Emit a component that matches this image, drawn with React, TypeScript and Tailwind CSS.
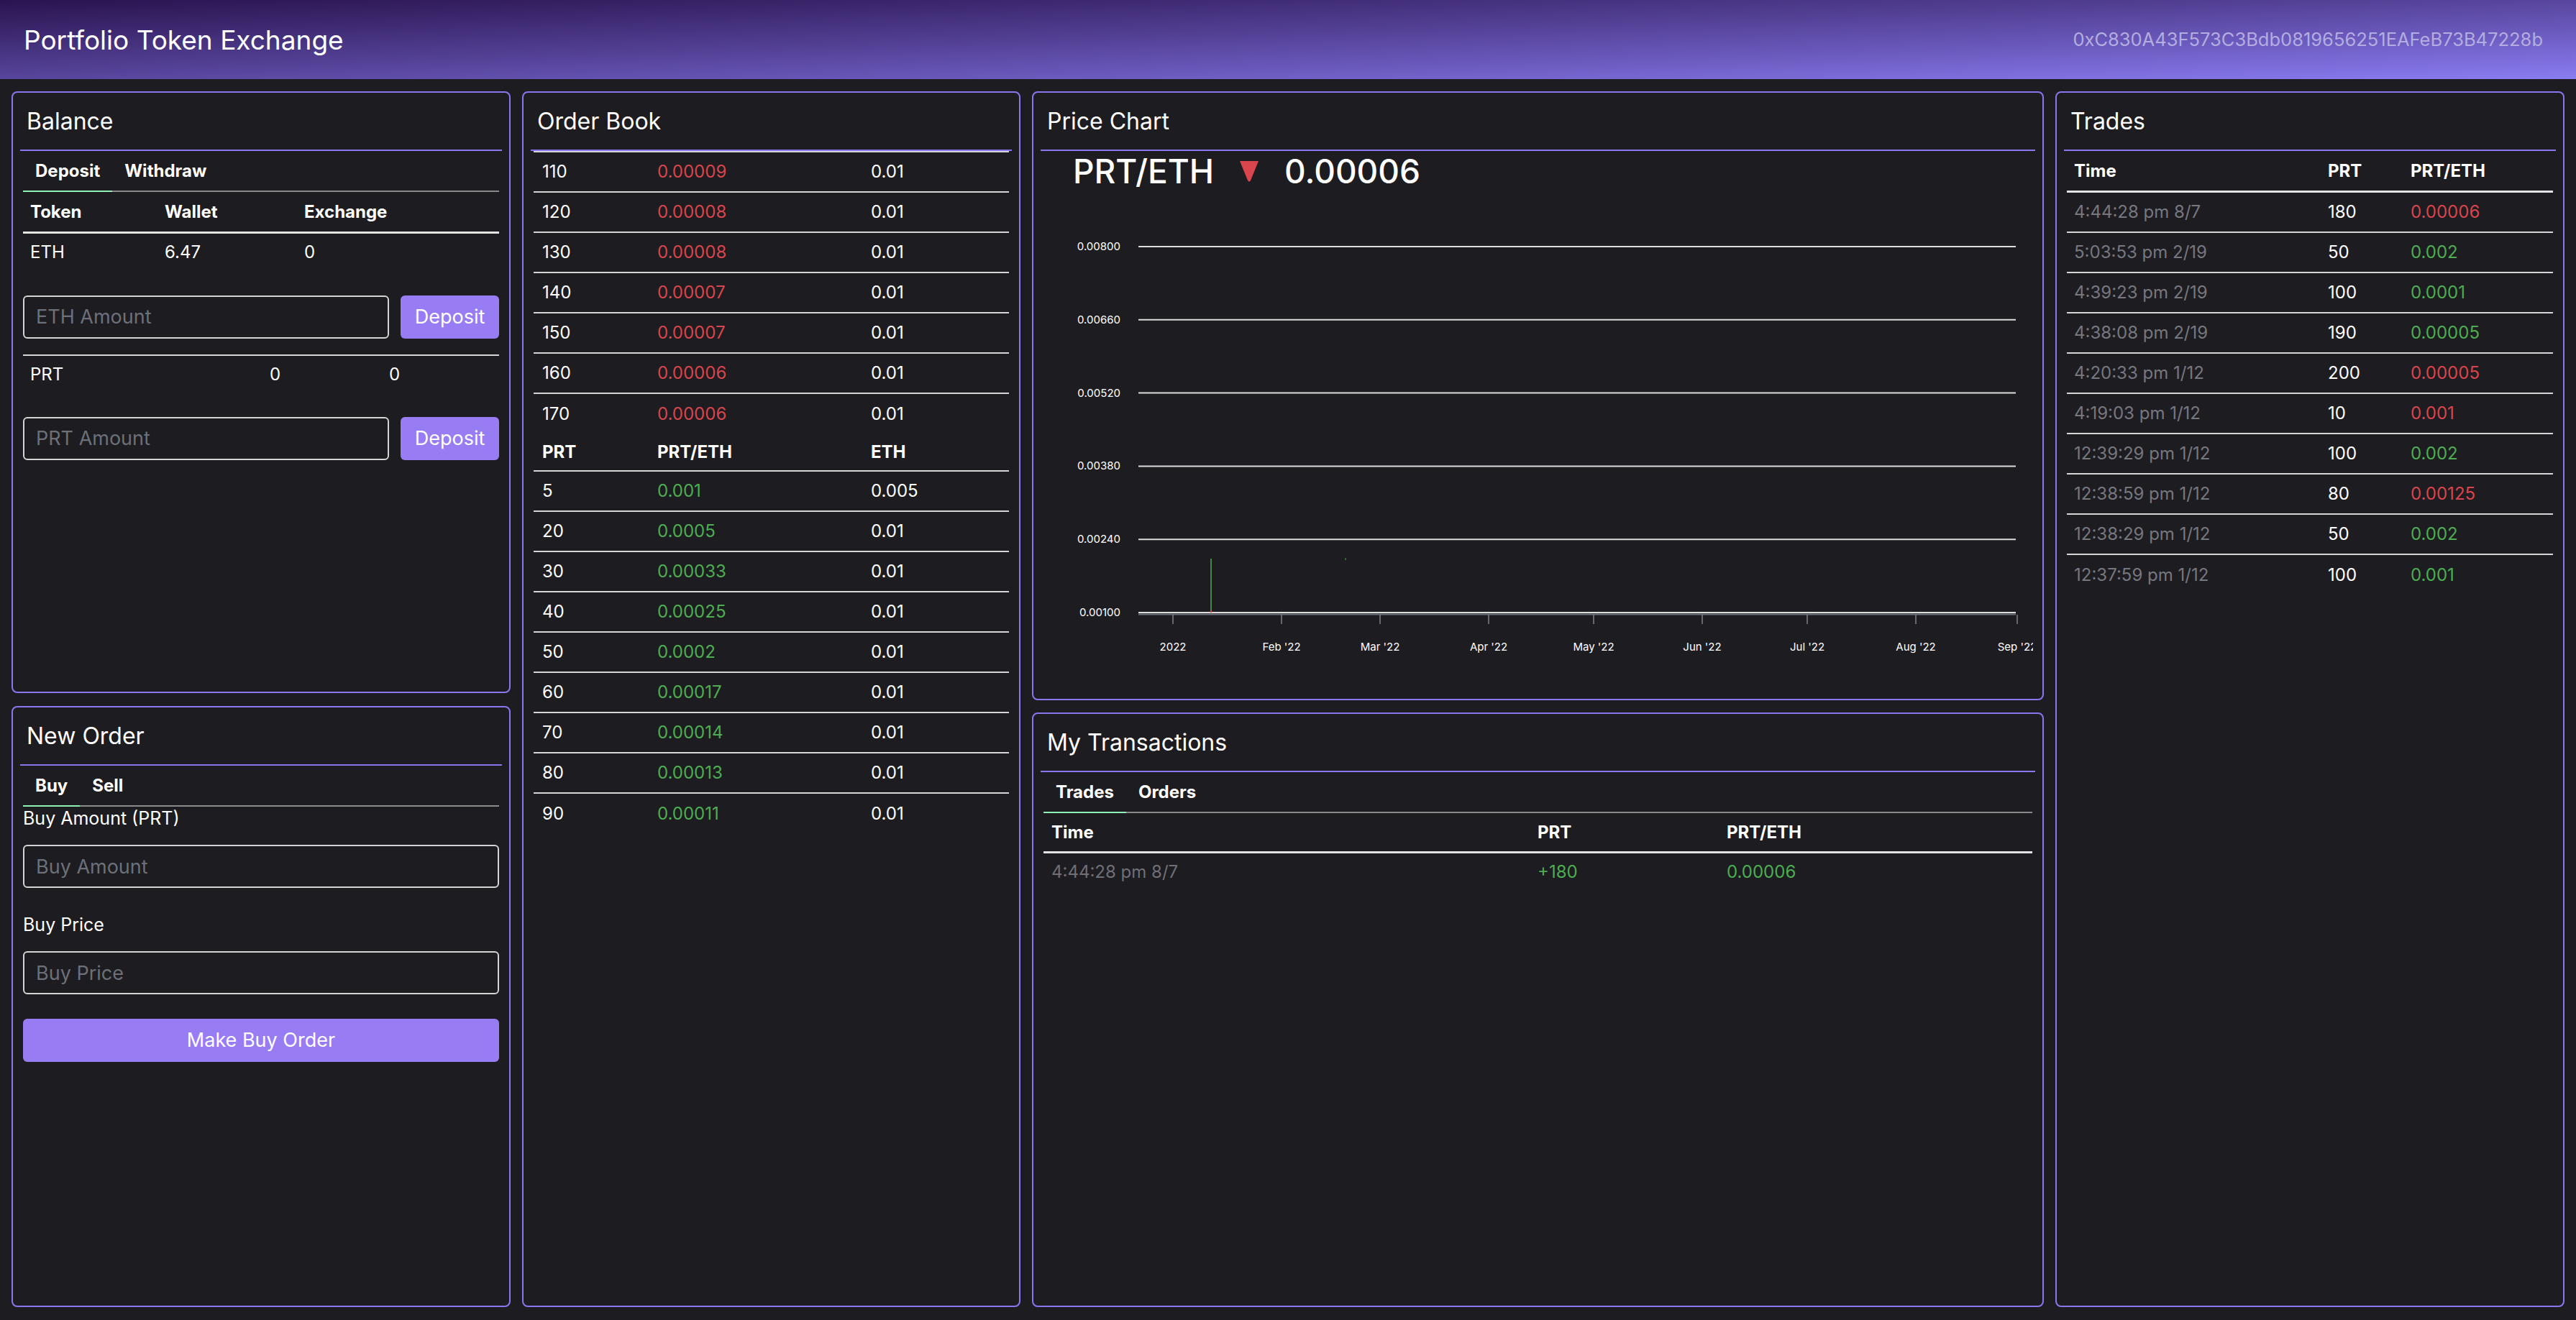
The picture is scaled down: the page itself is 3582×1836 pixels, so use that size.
import type { ReactNode } from 'react'

const sells: [string, string, string][] = [
  ['110', '0.00009', '0.01'],
  ['120', '0.00008', '0.01'],
  ['130', '0.00008', '0.01'],
  ['140', '0.00007', '0.01'],
  ['150', '0.00007', '0.01'],
  ['160', '0.00006', '0.01'],
  ['170', '0.00006', '0.01'],
]

const buys: [string, string, string][] = [
  ['5', '0.001', '0.005'],
  ['20', '0.0005', '0.01'],
  ['30', '0.00033', '0.01'],
  ['40', '0.00025', '0.01'],
  ['50', '0.0002', '0.01'],
  ['60', '0.00017', '0.01'],
  ['70', '0.00014', '0.01'],
  ['80', '0.00013', '0.01'],
  ['90', '0.00011', '0.01'],
]

const trades: { time: string; amount: string; price: string; up: boolean }[] = [
  { time: '4:44:28 pm 8/7', amount: '180', price: '0.00006', up: false },
  { time: '5:03:53 pm 2/19', amount: '50', price: '0.002', up: true },
  { time: '4:39:23 pm 2/19', amount: '100', price: '0.0001', up: true },
  { time: '4:38:08 pm 2/19', amount: '190', price: '0.00005', up: true },
  { time: '4:20:33 pm 1/12', amount: '200', price: '0.00005', up: false },
  { time: '4:19:03 pm 1/12', amount: '10', price: '0.001', up: false },
  { time: '12:39:29 pm 1/12', amount: '100', price: '0.002', up: true },
  { time: '12:38:59 pm 1/12', amount: '80', price: '0.00125', up: false },
  { time: '12:38:29 pm 1/12', amount: '50', price: '0.002', up: true },
  { time: '12:37:59 pm 1/12', amount: '100', price: '0.001', up: true },
]

const yTicks = ['0.00800', '0.00660', '0.00520', '0.00380', '0.00240', '0.00100']
const xTicks: [string, number][] = [
  ['2022', 184],
  ["Feb '22", 335],
  ["Mar '22", 472],
  ["Apr '22", 623],
  ["May '22", 769],
  ["Jun '22", 920],
  ["Jul '22", 1066],
  ["Aug '22", 1217],
  ["Sep '22", 1358],
]

function Panel({ title, className, children }: { title: string; className?: string; children?: ReactNode }) {
  return (
    <section className={`flex min-h-0 flex-col rounded-lg border-2 border-[#8a77f0] px-[10px] ${className ?? ''}`}>
      <div className="flex h-[81px] shrink-0 items-center border-b-2 border-[#8a77f0] pl-[9px] text-[32px] leading-none">
        {title}
      </div>
      {children}
    </section>
  )
}

function Tabs({ items }: { items: string[] }) {
  return (
    <div className="mx-1 flex h-[57px] shrink-0 items-stretch border-b-2 border-[#8a8a8a]">
      {items.map((t, i) => (
        <div
          key={t}
          className={`-mb-[2px] flex items-center border-b-2 px-[17px] text-[24px] font-bold ${
            i === 0 ? 'border-[#8ff0b4]' : 'border-transparent'
          }`}
        >
          {t}
        </div>
      ))}
    </div>
  )
}

function AmountRow({ placeholder }: { placeholder: string }) {
  return (
    <div className="mx-1 flex h-[60px] gap-4">
      <input
        placeholder={placeholder}
        className="min-w-0 flex-1 rounded-md border-2 border-[#d4d4d4] bg-transparent px-4 text-[27px] text-white outline-none placeholder:text-[#6b7079]"
      />
      <button className="w-[137px] rounded-md bg-[#977cf4] text-[27px] text-white">Deposit</button>
    </div>
  )
}

function Balance() {
  return (
    <Panel title="Balance" className="h-[837px] shrink-0">
      <Tabs items={['Deposit', 'Withdraw']} />
      <div className="mx-1">
        <div className="grid h-[58px] grid-cols-[187px_194px_1fr] items-center border-b-[3px] border-[#e2e2e2] text-[24px] font-bold">
          <div className="pl-[10px]">Token</div>
          <div className="pl-[10px]">Wallet</div>
          <div className="pl-[10px]">Exchange</div>
        </div>
        <div className="grid h-[52px] grid-cols-[187px_194px_1fr] items-center text-[24px]">
          <div className="pl-[10px]">ETH</div>
          <div className="pl-[10px]">6.47</div>
          <div className="pl-[10px]">0</div>
        </div>
      </div>
      <div className="mt-[34px]">
        <AmountRow placeholder="ETH Amount" />
      </div>
      <div className="mx-1 mt-[22px] border-t-2 border-[#d6d6d6]">
        <div className="grid h-[52px] grid-cols-[333px_166px_1fr] items-center text-[24px]">
          <div className="pl-[10px]">PRT</div>
          <div className="pl-[10px]">0</div>
          <div className="pl-[10px]">0</div>
        </div>
      </div>
      <div className="mt-[33px]">
        <AmountRow placeholder="PRT Amount" />
      </div>
    </Panel>
  )
}

function NewOrder() {
  return (
    <Panel title="New Order" className="flex-1">
      <Tabs items={['Buy', 'Sell']} />
      <div className="mx-1 flex flex-col text-[25px]">
        <label className="mt-[2px] leading-[29px]">Buy Amount (PRT)</label>
        <input
          placeholder="Buy Amount"
          className="mt-[22px] h-[60px] rounded-md border-2 border-[#d4d4d4] bg-transparent px-4 text-[27px] text-white outline-none placeholder:text-[#6b7079]"
        />
        <label className="mt-[37px] leading-[29px]">Buy Price</label>
        <input
          placeholder="Buy Price"
          className="mt-[22px] h-[60px] rounded-md border-2 border-[#d4d4d4] bg-transparent px-4 text-[27px] text-white outline-none placeholder:text-[#6b7079]"
        />
        <button className="mt-[34px] h-[60px] rounded-md bg-[#977cf4] text-[27px] text-white">Make Buy Order</button>
      </div>
    </Panel>
  )
}

function OrderBook() {
  const row = 'grid h-[56px] grid-cols-[160px_297px_1fr] items-center text-[24px]'
  return (
    <Panel title="Order Book" className="h-full">
      <div className="mx-1 border-t-2 border-[#d6d6d6]">
        {sells.map(([a, p, e], i) => (
          <div key={a} className={`${row} ${i < sells.length - 1 ? 'border-b-2 border-[#d6d6d6]' : ''}`}>
            <div className="pl-3">{a}</div>
            <div className="pl-3 text-[#d9454c]">{p}</div>
            <div className="pl-3">{e}</div>
          </div>
        ))}
        <div className="grid h-[52px] grid-cols-[160px_297px_1fr] items-center border-b-2 border-[#d6d6d6] text-[24px] font-bold">
          <div className="pl-3">PRT</div>
          <div className="pl-3">PRT/ETH</div>
          <div className="pl-3">ETH</div>
        </div>
        {buys.map(([a, p, e], i) => (
          <div key={a} className={`${row} ${i < buys.length - 1 ? 'border-b-2 border-[#d6d6d6]' : ''}`}>
            <div className="pl-3">{a}</div>
            <div className="pl-3 text-[#4cae50]">{p}</div>
            <div className="pl-3">{e}</div>
          </div>
        ))}
      </div>
    </Panel>
  )
}

function Chart() {
  const ys = yTicks.map((_, i) => 77 + i * 101.8)
  return (
    <svg width="1380" height="680" viewBox="0 0 1380 680" className="block shrink-0">
      {yTicks.map((t, i) => (
        <g key={t}>
          <line x1="136" x2="1356" y1={ys[i]} y2={ys[i]} stroke="#dcdcdc" strokeWidth="2" />
          <text x="111" y={ys[i] + 5} textAnchor="end" fontSize="15" fill="#ffffff">
            {t}
          </text>
        </g>
      ))}
      <line x1="136" x2="1356" y1="588.5" y2="588.5" stroke="#6f757d" strokeWidth="2" />
      {xTicks.map(([t, x]) => (
        <g key={t}>
          <line x1={x} x2={x} y1="589" y2="602" stroke="#7c828a" strokeWidth="1.5" />
          <text x={x} y="639" textAnchor="middle" fontSize="15" fill="#ffffff">
            {t}
          </text>
        </g>
      ))}
      <line x1="237" x2="237" y1="511" y2="585" stroke="#4cae50" strokeWidth="1.5" />
      <rect x="236" y="583" width="2" height="3" fill="#d9454c" />
      <line x1="424" x2="424" y1="510" y2="513" stroke="#4cae50" strokeWidth="1" />
    </svg>
  )
}

function PriceChart() {
  return (
    <Panel title="Price Chart" className="h-[847px] shrink-0 overflow-hidden">
      <div className="flex h-[56px] shrink-0 items-center pl-[45px] text-[46px] font-medium leading-none">
        <span>PRT/ETH</span>
        <svg width="30" height="32" viewBox="0 0 30 32" className="ml-[34px]">
          <path d="M2 2 H28 L17 29 Q15 32 13 29 Z" fill="#d9454c" />
        </svg>
        <span className="ml-[34px]">0.00006</span>
      </div>
      <Chart />
    </Panel>
  )
}

function MyTransactions() {
  return (
    <Panel title="My Transactions" className="flex-1">
      <Tabs items={['Trades', 'Orders']} />
      <div className="mx-1">
        <div className="grid h-[56px] grid-cols-[676px_263px_1fr] items-center border-b-[3px] border-[#e2e2e2] text-[24px] font-bold">
          <div className="pl-[11px]">Time</div>
          <div className="pl-[11px]">PRT</div>
          <div className="pl-[11px]">PRT/ETH</div>
        </div>
        <div className="grid h-[52px] grid-cols-[676px_263px_1fr] items-center text-[24px]">
          <div className="pl-[11px] text-[#6f6f78]">4:44:28 pm 8/7</div>
          <div className="pl-[11px] text-[#4cae50]">+180</div>
          <div className="pl-[11px] text-[#4cae50]">0.00006</div>
        </div>
      </div>
    </Panel>
  )
}

function Trades() {
  return (
    <Panel title="Trades" className="h-full">
      <div className="mx-1">
        <div className="grid h-[58px] grid-cols-[353px_115px_1fr] items-center border-b-[3px] border-[#e2e2e2] text-[24px] font-bold">
          <div className="pl-[10px]">Time</div>
          <div className="pl-[10px]">PRT</div>
          <div className="pl-[10px]">PRT/ETH</div>
        </div>
        {trades.map((t, i) => (
          <div
            key={t.time}
            className={`grid h-[56px] grid-cols-[353px_115px_1fr] items-center text-[24px] ${
              i < trades.length - 1 ? 'border-b-2 border-[#d6d6d6]' : ''
            }`}
          >
            <div className="pl-[10px] text-[#77777f]">{t.time}</div>
            <div className="pl-[10px]">{t.amount}</div>
            <div className={`pl-[10px] ${t.up ? 'text-[#4cae50]' : 'text-[#d9454c]'}`}>{t.price}</div>
          </div>
        ))}
      </div>
    </Panel>
  )
}

export default function App() {
  return (
    <div className="flex h-screen flex-col overflow-hidden bg-[#1d1c21] font-['Inter','Noto_Sans',sans-serif] text-white">
      <header className="flex h-[110px] shrink-0 items-center justify-between bg-linear-to-br from-[#2a1450] to-[#8a7cf2] pl-[33px] pr-[46px]">
        <h1 className="text-[37px] leading-none">Portfolio Token Exchange</h1>
        <span className="text-[25.5px] text-[#b4addf]">0xC830A43F573C3Bdb0819656251EAFeB73B47228b</span>
      </header>
      <main className="grid min-h-0 flex-1 grid-cols-[694px_693px_1407px_708px] gap-4 px-4 pb-[18px] pt-[17px]">
        <div className="flex min-h-0 flex-col gap-[18px]">
          <Balance />
          <NewOrder />
        </div>
        <OrderBook />
        <div className="flex min-h-0 flex-col gap-[17px]">
          <PriceChart />
          <MyTransactions />
        </div>
        <Trades />
      </main>
    </div>
  )
}
